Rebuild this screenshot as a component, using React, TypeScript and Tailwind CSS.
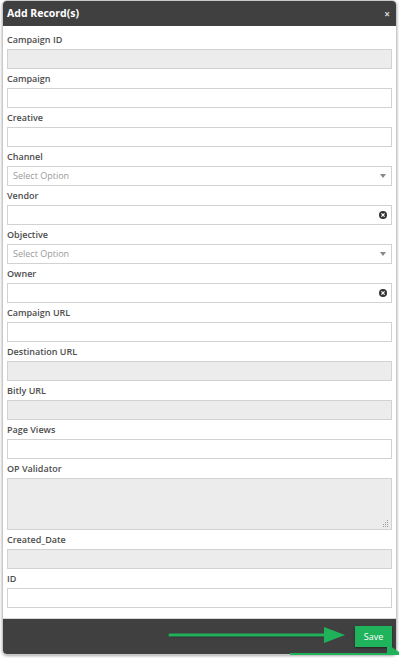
import type { ReactNode } from 'react';

type Field = {
  label: string;
  kind: 'text' | 'disabled' | 'select' | 'clear' | 'textarea';
};

const FIELDS: Field[] = [
  { label: 'Campaign ID', kind: 'disabled' },
  { label: 'Campaign', kind: 'text' },
  { label: 'Creative', kind: 'text' },
  { label: 'Channel', kind: 'select' },
  { label: 'Vendor', kind: 'clear' },
  { label: 'Objective', kind: 'select' },
  { label: 'Owner', kind: 'clear' },
  { label: 'Campaign URL', kind: 'text' },
  { label: 'Destination URL', kind: 'disabled' },
  { label: 'Bitly URL', kind: 'disabled' },
  { label: 'Page Views', kind: 'text' },
  { label: 'OP Validator', kind: 'textarea' },
  { label: 'Created_Date', kind: 'disabled' },
  { label: 'ID', kind: 'text' },
];

function ClearIcon() {
  return (
    <svg width="8" height="8" viewBox="0 0 8 8" className="shrink-0">
      <circle cx="4" cy="4" r="4" fill="#333" />
      <path d="M2.4 2.4 L5.6 5.6 M5.6 2.4 L2.4 5.6" stroke="#fff" strokeWidth="1.2" />
    </svg>
  );
}

function Caret() {
  return (
    <svg width="6" height="4" viewBox="0 0 6 4" className="shrink-0">
      <path d="M0 0 H6 L3 4 Z" fill="#888" />
    </svg>
  );
}

function Control({ kind }: { kind: Field['kind'] }) {
  const base = 'w-full border border-[#d2d2d2] flex items-center';
  let inner: ReactNode = null;

  if (kind === 'select') {
    inner = (
      <div className={`${base} h-[20px] bg-white pl-[5px] pr-[5px] justify-between`}>
        <span className="text-[9px] text-[#9a9a9a]">Select Option</span>
        <Caret />
      </div>
    );
  } else if (kind === 'clear') {
    inner = (
      <div className={`${base} h-[20px] bg-white pr-[4px] justify-end`}>
        <ClearIcon />
      </div>
    );
  } else if (kind === 'textarea') {
    inner = (
      <div className={`${base} relative h-[52px] bg-[#ececec]`}>
        <svg width="7" height="7" viewBox="0 0 7 7" className="absolute right-[2px] bottom-[2px]">
          <rect x="5" y="0" width="1" height="1" fill="#999" />
          <rect x="3" y="2" width="1" height="1" fill="#999" />
          <rect x="5" y="2" width="1" height="1" fill="#999" />
          <rect x="1" y="4" width="1" height="1" fill="#999" />
          <rect x="3" y="4" width="1" height="1" fill="#999" />
          <rect x="5" y="4" width="1" height="1" fill="#999" />
          <rect x="1" y="6" width="1" height="1" fill="#999" />
          <rect x="3" y="6" width="1" height="1" fill="#999" />
          <rect x="5" y="6" width="1" height="1" fill="#999" />
        </svg>
      </div>
    );
  } else {
    inner = (
      <div className={`${base} h-[20px] ${kind === 'disabled' ? 'bg-[#ececec]' : 'bg-white'}`} />
    );
  }

  return inner;
}

export default function App() {
  return (
    <div className="relative w-[399px] h-[658px] bg-white font-['Open_Sans',sans-serif]">
      <div className="ml-[2px] w-[395px] rounded-[5px] border border-[#c9c9c9] shadow-[0_1px_3px_rgba(0,0,0,0.35)] overflow-hidden">
        {/* Header */}
        <div className="h-[25px] bg-[#404040] flex items-center justify-between pl-[4px] pr-[6px]">
          <span className="text-[10.5px] font-bold text-white">Add Record(s)</span>
          <span className="text-[10px] font-bold text-[#d8d8d8] leading-none">×</span>
        </div>

        {/* Body */}
        <div className="bg-white px-[4px] pt-[4px] pb-[10px]">
          {FIELDS.map((f) => (
            <div key={f.label}>
              <div className="h-[19px] flex items-center text-[9px] font-semibold text-[#4d4d4d]">
                {f.label}
              </div>
              <Control kind={f.kind} />
            </div>
          ))}
        </div>

        {/* Footer */}
        <div className="h-[36px] bg-[#404040] border-t border-[#d6d6d6] flex items-center justify-end pr-[4px]">
          <button className="w-[37px] h-[21px] bg-[#1fb35c] text-white text-[9px] shadow-[0_1px_2px_rgba(0,0,0,0.5)]">
            Save
          </button>
        </div>
      </div>

      {/* Annotation arrows */}
      <svg className="absolute inset-0 pointer-events-none" width="399" height="658">
        <line x1="170" y1="636" x2="330" y2="636" stroke="#1a1a1a" strokeOpacity="0.4" strokeWidth="3" />
        <line x1="170" y1="635" x2="330" y2="635" stroke="#20b25a" strokeWidth="3" strokeLinecap="round" />
        <polygon points="324,627 345,635 324,643" fill="#20b25a" />
        <line x1="290" y1="654" x2="392" y2="654" stroke="#20b25a" strokeWidth="2" />
        <polygon points="387,646 390,646 399,652 399,655 387,655" fill="#20b25a" />
      </svg>
    </div>
  );
}
